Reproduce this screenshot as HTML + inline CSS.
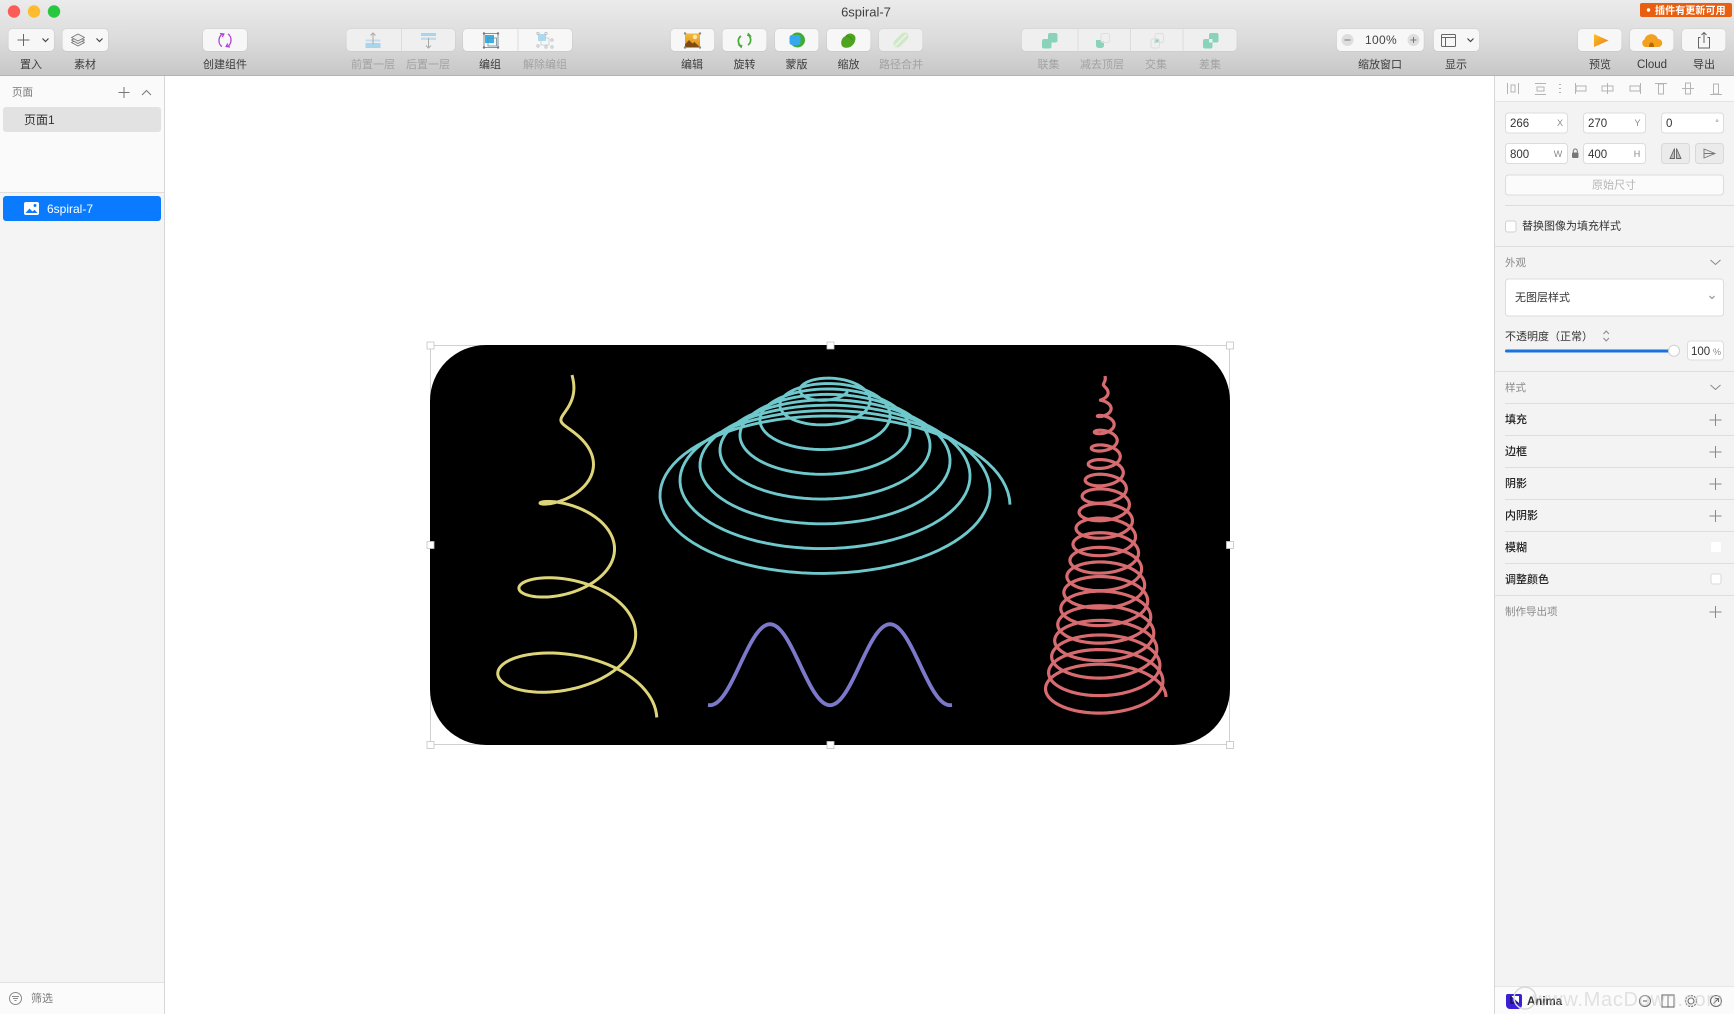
<!DOCTYPE html>
<html lang="zh">
<head>
<meta charset="utf-8">
<title>6spiral-7</title>
<style>
html,body{margin:0;padding:0;width:1734px;height:1014px;overflow:hidden;background:#fff}
svg{display:block;position:absolute;left:0;top:0;filter:blur(.35px)}
text{font-family:"Liberation Sans","Noto Sans CJK SC",sans-serif;font-size:11px}
.l{text-anchor:middle;fill:#3c3c3c}
.d{text-anchor:middle;fill:#a2a2a2}
.b{fill:#f7f7f7;filter:drop-shadow(0 .5px .5px rgba(0,0,0,.18))}
.bd{fill:#efefef;filter:drop-shadow(0 .5px .5px rgba(0,0,0,.14))}
.i{fill:#fff;stroke:#dcdcdc;stroke-width:1}
.n{fill:#333;font-size:11.5px}
.u{fill:#888;font-size:9px;text-anchor:middle}
.h{fill:#8a8a8a;font-size:10.5px}
.t{fill:#222;font-weight:500;font-size:11px}
.sep{stroke:#dddddd;stroke-width:1}
.ic{fill:none;stroke:#6b6b6b;stroke-width:1.1}
.al{fill:none;stroke:#b4b4b4;stroke-width:1}
.hd{fill:#fff;stroke:#c4c4c4;stroke-width:.8}
</style>
</head>
<body>
<svg width="1734" height="1014" viewBox="0 0 1734 1014" xmlns="http://www.w3.org/2000/svg">
<defs>
<linearGradient id="tb" x1="0" y1="0" x2="0" y2="1">
<stop offset="0" stop-color="#ebebeb"/><stop offset=".5" stop-color="#dcdcdc"/><stop offset="1" stop-color="#c7c7c7"/>
</linearGradient>
<linearGradient id="pl" x1="0" y1="0" x2="1" y2="1">
<stop offset="0" stop-color="#f8c32c"/><stop offset="1" stop-color="#ef7a12"/>
</linearGradient>
<linearGradient id="im" x1="0" y1="0" x2="0" y2="1">
<stop offset="0" stop-color="#f3b93a"/><stop offset="1" stop-color="#e0901c"/>
</linearGradient>
</defs>

<!-- canvas -->
<rect x="0" y="0" width="1734" height="1014" fill="#ffffff"/>

<!-- left panel -->
<rect x="0" y="76" width="164.5" height="938" fill="#f3f3f3"/>
<rect x="0" y="76" width="164.5" height="116" fill="#fafafa"/>
<rect x="0" y="192" width="164.5" height="790" fill="#f4f4f4"/>
<rect x="0" y="982" width="164.5" height="32" fill="#fbfbfb"/>
<line x1="0" y1="192.5" x2="164" y2="192.5" stroke="#dedede"/>
<line x1="0" y1="982.5" x2="164" y2="982.5" stroke="#e2e2e2"/>
<line x1="164.5" y1="76" x2="164.5" y2="1014" stroke="#d6d6d6"/>
<text x="12" y="95.500" fill="#777" style="font-size:10.5px">页面</text>
<path d="M124 87v11M118.500 92.500h11" stroke="#777" fill="none"/>
<path d="M142 95l4.500-4.500 4.500 4.500" stroke="#777" fill="none"/>
<rect x="3" y="107" width="158" height="25" rx="3" fill="#e2e2e2"/>
<text x="24" y="124" fill="#333" style="font-size:12px">页面1</text>
<rect x="3" y="196" width="158" height="25" rx="3" fill="#0a7bff"/>
<rect x="24" y="202" width="15" height="13" rx="2" fill="#fff"/>
<path d="M25.500 213l4-4.500 3 3 2-1.800 3 3.300z" fill="#0a7bff"/>
<circle cx="35" cy="205.500" r="1.500" fill="#0a7bff"/>
<text x="47" y="213" fill="#fff" style="font-size:12px">6spiral-7</text>
<circle cx="15.500" cy="998.500" r="6" fill="none" stroke="#8a8a8a"/>
<path d="M12 996.500h7M13 998.500h5M14.500 1000.500h2" stroke="#8a8a8a" fill="none"/>
<text x="31" y="1002" fill="#7c7c7c">筛选</text>

<!-- right panel -->
<rect x="1494" y="76" width="240" height="938" fill="#f3f3f3"/>
<rect x="1494" y="76" width="240" height="25" fill="#fafafa"/>
<line x1="1494.500" y1="76" x2="1494.500" y2="1014" stroke="#d6d6d6"/>
<line x1="1494" y1="101.500" x2="1734" y2="101.500" stroke="#e4e4e4"/>
<!-- align icons -->
<g class="al">
<path d="M1507.500 83v11M1518.500 83v11"/><rect x="1511" y="85" width="4" height="7"/>
<path d="M1535 83.500h11M1535 94.500h11"/><rect x="1537" y="87" width="7" height="4"/>
<path d="M1560 84v1M1560 88v1M1560 92v1" stroke-width="1.500" stroke="#999"/>
<path d="M1575.500 83v11"/><rect x="1576" y="86" width="10" height="5"/>
<path d="M1607.500 83v11"/><rect x="1602" y="86" width="11" height="5"/>
<path d="M1640.500 83v11"/><rect x="1630" y="86" width="10" height="5"/>
<path d="M1655 83.500h12"/><rect x="1658.500" y="84" width="5" height="10"/>
<path d="M1682 88.500h12"/><rect x="1685.500" y="83" width="5" height="11"/>
<path d="M1710 94.500h12"/><rect x="1713.500" y="84" width="5" height="10"/>
</g>
<!-- inputs -->
<rect class="i" x="1505.500" y="113" width="62" height="20" rx="3"/>
<rect class="i" x="1583.500" y="113" width="62" height="20" rx="3"/>
<rect class="i" x="1661.500" y="113" width="62" height="20" rx="3"/>
<rect class="i" x="1505.500" y="143.500" width="62" height="20" rx="3"/>
<rect class="i" x="1583.500" y="143.500" width="62" height="20" rx="3"/>
<text class="n" x="1510" y="127">266</text><text class="u" x="1560" y="126">X</text>
<text class="n" x="1588" y="127">270</text><text class="u" x="1637.500" y="126">Y</text>
<text class="n" x="1666" y="127">0</text><text class="u" x="1717" y="126">°</text>
<text class="n" x="1510" y="158">800</text><text class="u" x="1558" y="157">W</text>
<text class="n" x="1588" y="158">400</text><text class="u" x="1637" y="157">H</text>
<rect x="1572" y="152.500" width="6.500" height="5.500" rx="1" fill="#777"/>
<path d="M1573.300 152.500v-1.500a2 2 0 0 1 4 0v1.500" fill="none" stroke="#777"/>
<rect x="1661.500" y="143.500" width="28" height="20" rx="3" fill="#ebebeb" stroke="#d8d8d8"/>
<rect x="1695.500" y="143.500" width="28" height="20" rx="3" fill="#ebebeb" stroke="#d8d8d8"/>
<path d="M1674.500 148.500l-4.500 10h4.500zM1676.500 148.500v10h4.500z" fill="#bbb" stroke="#666" stroke-width=".9"/>
<path d="M1704 149l11 4.500-11 4.500zM1704 153.500h11" fill="#e8e8e8" stroke="#777" stroke-width=".9"/>
<rect x="1505.500" y="175" width="218" height="20" rx="3" fill="#fbfbfb" stroke="#dcdcdc"/>
<text x="1614" y="188.500" text-anchor="middle" fill="#b5b5b5">原始尺寸</text>
<line class="sep" x1="1505" y1="205.500" x2="1734" y2="205.500"/>
<rect x="1505.500" y="221" width="10.500" height="11" rx="2" fill="#fff" stroke="#d2d2d2"/>
<text x="1522" y="229.500" fill="#333">替换图像为填充样式</text>
<line class="sep" x1="1494" y1="246.500" x2="1734" y2="246.500"/>
<text class="h" x="1505" y="266">外观</text>
<path d="M1710.500 260l5 4.500 5-4.500" fill="none" stroke="#888"/>
<rect class="i" x="1505.500" y="279" width="218" height="37" rx="3"/>
<text x="1515" y="301" fill="#333">无图层样式</text>
<path d="M1709.500 296l2.500 2.500 2.500-2.500" fill="none" stroke="#888"/>
<text x="1505" y="340" fill="#333">不透明度（正常）</text>
<path d="M1603.500 334l2.700-3 2.700 3M1603.500 338l2.700 3 2.700-3" fill="none" stroke="#888"/>
<rect x="1505" y="349.500" width="168" height="3" rx="1.500" fill="#1a72dc"/>
<circle cx="1674" cy="350.700" r="5.500" fill="#fff" stroke="#d0d0d0"/>
<rect class="i" x="1687.500" y="341" width="36" height="19" rx="3"/>
<text x="1691" y="355" fill="#333" style="font-size:11.500px">100</text>
<text x="1713" y="355" fill="#888" style="font-size:9px">%</text>
<line class="sep" x1="1494" y1="371.500" x2="1734" y2="371.500"/>
<text class="h" x="1505" y="391">样式</text>
<path d="M1710.500 385l5 4.500 5-4.500" fill="none" stroke="#888"/>
<line class="sep" x1="1505" y1="403.500" x2="1734" y2="403.500"/>
<text class="t" x="1505" y="423">填充</text>
<line class="sep" x1="1505" y1="435.500" x2="1734" y2="435.500"/>
<text class="t" x="1505" y="455">边框</text>
<line class="sep" x1="1505" y1="467.500" x2="1734" y2="467.500"/>
<text class="t" x="1505" y="487">阴影</text>
<line class="sep" x1="1505" y1="499.500" x2="1734" y2="499.500"/>
<text class="t" x="1505" y="519">内阴影</text>
<line class="sep" x1="1505" y1="531.500" x2="1734" y2="531.500"/>
<text class="t" x="1505" y="551">模糊</text>
<line class="sep" x1="1505" y1="563.500" x2="1734" y2="563.500"/>
<text class="t" x="1505" y="583">调整颜色</text>
<line class="sep" x1="1494" y1="595.500" x2="1734" y2="595.500"/>
<text class="h" x="1505" y="615">制作导出项</text>
<g stroke="#888" fill="none">
<path d="M1715.500 414v12M1709.500 420h12"/>
<path d="M1715.500 446v12M1709.500 452h12"/>
<path d="M1715.500 478v12M1709.500 484h12"/>
<path d="M1715.500 510v12M1709.500 516h12"/>
<path d="M1715.500 606v12M1709.500 612h12"/>
</g>
<rect x="1711" y="542" width="10" height="10" rx="2" fill="#fff"/>
<rect x="1711" y="574" width="10" height="10" rx="2" fill="#fff" stroke="#dadada"/>

<!-- right footer -->
<rect x="1495" y="987" width="239" height="27" fill="#fbfbfb"/>
<line x1="1495" y1="986.500" x2="1734" y2="986.500" stroke="#e6e6e6"/>
<path d="M1507 994h13a2 2 0 0 1 2 2v9a4 4 0 0 1-4 4h-8a4 4 0 0 1-4-4v-9a2 2 0 0 1 1-2z" fill="#3a1fd6"/>
<path d="M1511 996h8v7z" fill="#fff"/><path d="M1511 996v7h7" fill="none" stroke="#20124f" stroke-width="1.500"/>
<text x="1527" y="1005" fill="#333" style="font-weight:700;font-size:11.500px">Anima</text>
<g class="ic" stroke="#8a8a8a">
<circle cx="1645" cy="1001" r="5.500"/><path d="M1643 1001h4"/>
<rect x="1662" y="995" width="12" height="12"/><path d="M1668 995v12"/>
<circle cx="1691" cy="1001" r="3"/><circle cx="1691" cy="1001" r="5.500" stroke-dasharray="2 1.200"/>
<circle cx="1716" cy="1001" r="5.500"/><path d="M1713.500 1003.500l5-5M1715 998.500h3.500v3.500"/>
</g>
<circle cx="1525" cy="998" r="11" fill="none" stroke="#d8d8d8" stroke-width="1.500"/>
<text x="1533" y="1006" textLength="190" lengthAdjust="spacing" style="font-size:20px" fill="#c8c8c8" fill-opacity=".5">www.MacDown.com</text>

<!-- toolbar -->
<rect x="0" y="0" width="1734" height="75.500" fill="url(#tb)"/>
<line x1="0" y1="75.500" x2="1734" y2="75.500" stroke="#b4b4b4"/>
<circle cx="14" cy="11.500" r="6.200" fill="#fc5c57"/>
<circle cx="34" cy="11.500" r="6.200" fill="#fdbb2d"/>
<circle cx="54" cy="11.500" r="6.200" fill="#29c73f"/>
<text x="866" y="16.500" text-anchor="middle" fill="#3f3f3f" style="font-size:13px">6spiral-7</text>
<rect x="1640" y="3" width="92" height="14" rx="2" fill="#e85f10"/>
<circle cx="1648.500" cy="10" r="1.700" fill="#fff"/>
<text x="1655" y="14" fill="#fff" style="font-size:10px;font-weight:700;letter-spacing:.1px">插件有更新可用</text>

<!-- buttons -->
<rect class="b" x="8.500" y="29" width="45.500" height="22" rx="4"/>
<rect class="b" x="62.500" y="29" width="45.500" height="22" rx="4"/>
<rect class="b" x="203" y="29" width="44" height="22" rx="4"/>
<rect class="bd" x="346.500" y="29" width="108.500" height="22" rx="4"/>
<rect class="b" x="463" y="29" width="109" height="22" rx="4"/>
<path d="M401.500 29v22" stroke="#dcdcdc"/>
<path d="M518 29v22" stroke="#dcdcdc"/>
<rect class="b" x="670.800" y="29" width="43.500" height="22" rx="4"/>
<rect class="b" x="722.500" y="29" width="44" height="22" rx="4"/>
<rect class="b" x="775" y="29" width="43.500" height="22" rx="4"/>
<rect class="b" x="827" y="29" width="43.500" height="22" rx="4"/>
<rect class="bd" x="879" y="29" width="43.500" height="22" rx="4"/>
<rect class="bd" x="1021.700" y="29" width="215" height="22" rx="4"/>
<path d="M1078 29v22M1130.500 29v22M1183 29v22" stroke="#dcdcdc"/>
<rect class="b" x="1336.800" y="29" width="87" height="22" rx="4"/>
<rect class="b" x="1433.700" y="29" width="45.500" height="22" rx="4"/>
<rect class="b" x="1578" y="29" width="43.500" height="22" rx="4"/>
<rect class="b" x="1630" y="29" width="43.500" height="22" rx="4"/>
<rect class="b" x="1682" y="29" width="43.500" height="22" rx="4"/>

<!-- button icons -->
<path d="M23.500 34v12M17.500 40h12" stroke="#666" fill="none"/>
<path d="M42.500 38.500l3 3 3-3" stroke="#444" stroke-width="1.200" fill="none"/>
<g fill="#efefef" stroke="#777" stroke-width=".9" stroke-linejoin="round">
<path d="M71.500 42.500l6.500 3.500 6.500-3.500-6.500-3.500z"/>
<path d="M71.500 40l6.500 3.500 6.500-3.500-6.500-3.500z"/>
<path d="M71.500 37.500l6.500 3.500 6.500-3.500-6.500-3.500z"/>
</g>
<path d="M96.500 38.500l3 3 3-3" stroke="#444" stroke-width="1.200" fill="none"/>

<g fill="none" stroke="#b23fd6" stroke-width="1.300">
<path d="M223.500 34c-5.500 1-6 10-1.500 12.500"/><path d="M220 33.500l3.800.5-1.500 3"/>
<path d="M226.500 46.500c5.500-1 6-10 1.500-12.500"/><path d="M230 47l-3.800-.5 1.500-3"/>
</g>

<!-- bring/send -->
<rect x="365.500" y="43" width="15" height="5" fill="#a8d5ec"/>
<rect x="365.500" y="39.500" width="15" height="2" fill="#bfdfef"/>
<path d="M373 44v-11M370.500 35.500l2.500-2.500 2.500 2.500" fill="none" stroke="#a9a9a9"/>
<rect x="421" y="33" width="15" height="3" fill="#a8d5ec"/>
<rect x="421" y="37.500" width="15" height="2.500" fill="#bfdfef"/>
<path d="M428.500 38v10M426 45.500l2.500 2.500 2.500-2.500" fill="none" stroke="#a9a9a9"/>

<!-- group -->
<rect x="484" y="33.500" width="14" height="14" fill="none" stroke="#777" stroke-width=".8"/>
<rect x="485" y="35" width="9" height="8" fill="#35b2ea"/>
<rect x="488" y="38" width="8.500" height="8" fill="none" stroke="#6c8c9a" stroke-width=".8"/>
<g fill="#777"><circle cx="484" cy="33.500" r="1.200"/><circle cx="498" cy="33.500" r="1.200"/><circle cx="484" cy="47.500" r="1.200"/><circle cx="498" cy="47.500" r="1.200"/></g>
<rect x="538" y="34" width="8" height="7" fill="#a9daf0"/>
<rect x="541" y="38" width="8" height="7" fill="none" stroke="#b9cfd8" stroke-width=".8"/>
<g fill="none" stroke="#bdbdbd" stroke-width=".8"><circle cx="538" cy="33.500" r="1.200"/><circle cx="546" cy="33.500" r="1.200"/><circle cx="538" cy="46" r="1.200"/><circle cx="552" cy="40" r="1.200"/><circle cx="552" cy="47" r="1.200"/><circle cx="546" cy="47" r="1.200"/></g>

<!-- edit -->
<rect x="685" y="33.500" width="15" height="14" fill="url(#im)"/>
<circle cx="695" cy="37" r="2.200" fill="#ffe9a8"/>
<path d="M685 47.500v-3l4-4.500 3.500 3.500 2-1.500 5.500 5.500z" fill="#7e4c12"/>
<g fill="#8a8a8a"><circle cx="685" cy="33.500" r="1.200"/><circle cx="700" cy="33.500" r="1.200"/><circle cx="685" cy="47.500" r="1.200"/><circle cx="700" cy="47.500" r="1.200"/></g>

<!-- rotate -->
<g fill="none" stroke="#46ab38" stroke-width="1.700">
<path d="M741 36c-3 2-3.800 6.500-.5 10"/>
<path d="M748 45c3-2 3.800-6.500.5-10"/>
</g>
<path d="M737.500 44.500l5 .5-1 3.500zM752 36.500l-5-.5 1-3.500z" fill="#46ab38"/>

<!-- mask -->
<circle cx="797.500" cy="40" r="7.500" fill="#3fae2e"/>
<rect x="789.500" y="35" width="11" height="10" rx="2.500" fill="#36a9ee"/>

<!-- scale -->
<path d="M842 46c-2-4 0-8.500 3.500-10 1.500-2.500 5-3 7-2 2.500 1 3.500 3.500 2.800 6-.8 4-3.800 7.500-8.300 7.800-2 .1-4-.5-5-1.800z" fill="#4ea41f"/>
<path d="M846 36c2 0 5.500 1.500 6.500 4.500" stroke="#2f8412" fill="none" stroke-width=".7"/>

<!-- path merge -->
<g transform="rotate(-45 901 40)">
<rect x="892" y="36" width="18" height="8" rx="4" fill="#cfe8c6"/>
<path d="M893 40h16" stroke="#f2f2f2" stroke-width="1.400"/>
</g>

<!-- boolean -->
<g fill="#8ad3bb">
<rect x="1042" y="39" width="9.500" height="9.500" rx="2"/><rect x="1048" y="33" width="9.500" height="9.500" rx="2"/>
<path d="M1096 40h5v1.500h3v4a2.500 2.500 0 0 1-2.500 2.500h-3a2.500 2.500 0 0 1-2.500-2.500z"/>
<rect x="1154.500" y="38.500" width="4" height="4.500"/>
<rect x="1203" y="39" width="9.500" height="9.500" rx="2"/><rect x="1209" y="33" width="9.500" height="9.500" rx="2"/>
</g>
<rect x="1101" y="33.500" width="8.500" height="9" rx="2" fill="none" stroke="#dedede"/>
<rect x="1151" y="39" width="8.500" height="9" rx="2" fill="none" stroke="#dedede"/>
<rect x="1155" y="33.500" width="8.500" height="9" rx="2" fill="none" stroke="#dedede"/>
<rect x="1209" y="39" width="3.500" height="3.500" fill="#efefef"/>

<!-- zoom -->
<circle cx="1347.500" cy="40" r="6" fill="#dedede"/><path d="M1344.500 40h6" stroke="#777"/>
<circle cx="1413.500" cy="40" r="6" fill="#dedede"/><path d="M1410.500 40h6M1413.500 37v6" stroke="#777"/>
<text x="1381" y="44" text-anchor="middle" fill="#444" style="font-size:12px;letter-spacing:.3px">100%</text>
<!-- view -->
<rect x="1441.500" y="34.500" width="14" height="12" rx="1" fill="none" stroke="#666"/>
<path d="M1441.500 37.500h14M1445.500 37.500v9" fill="none" stroke="#666"/>
<path d="M1467.500 38.500l3 3 3-3" stroke="#444" stroke-width="1.200" fill="none"/>
<!-- preview -->
<path d="M1594 34l14.500 6.500-14.500 6.500z" fill="url(#pl)"/>
<!-- cloud -->
<path d="M1645.500 47a4 4 0 0 1-1-7.500 7 7 0 0 1 13.500-.5 4 4 0 0 1 .5 8z" fill="#f2a01d"/>
<path d="M1649 47c0-3 1-4.500 2.500-4.500s2.500 1.500 2.500 4.500z" fill="#b9640f"/>
<!-- export -->
<path d="M1700.500 37.500h-2v10.500h11v-10.500h-2M1704 43v-10.500M1701.500 35l2.500-2.500 2.500 2.500" fill="none" stroke="#666"/>

<!-- labels -->
<text class="l" x="31" y="68">置入</text>
<text class="l" x="85" y="68">素材</text>
<text class="l" x="225" y="68">创建组件</text>
<text class="d" x="373" y="68">前置一层</text>
<text class="d" x="428" y="68">后置一层</text>
<text class="l" x="490" y="68">编组</text>
<text class="d" x="545" y="68">解除编组</text>
<text class="l" x="692" y="68">编辑</text>
<text class="l" x="744.500" y="68">旋转</text>
<text class="l" x="796.500" y="68">蒙版</text>
<text class="l" x="848.500" y="68">缩放</text>
<text class="d" x="901" y="68">路径合并</text>
<text class="d" x="1048.500" y="68">联集</text>
<text class="d" x="1102" y="68">减去顶层</text>
<text class="d" x="1156" y="68">交集</text>
<text class="d" x="1210" y="68">差集</text>
<text class="l" x="1380" y="68">缩放窗口</text>
<text class="l" x="1456" y="68">显示</text>
<text class="l" x="1600" y="68">预览</text>
<text class="l" x="1652" y="68" style="font-size:11.500px">Cloud</text>
<text class="l" x="1704" y="68">导出</text>

<!-- artwork -->
<rect x="430.500" y="345.500" width="799" height="399" fill="none" stroke="#d0d0d0" stroke-width="1"/>
<rect x="430" y="345" width="800" height="400" rx="56" ry="56" fill="#000"/>
<path id="yel" fill="none" stroke="#ded57a" stroke-width="3" stroke-linecap="butt" stroke-linejoin="round"/>
<path id="cya" fill="none" stroke="#6fc8cb" stroke-width="2.900" stroke-linejoin="round"/>
<path id="red" fill="none" stroke="#d76b6f" stroke-width="3.200" stroke-linejoin="round"/>
<path id="pur" fill="none" stroke="#7c79cb" stroke-width="3.800"/>
<rect class="hd" x="427" y="342" width="7" height="7"/>
<rect class="hd" x="827" y="342" width="7" height="7"/>
<rect class="hd" x="1226.500" y="342" width="7" height="7"/>
<rect class="hd" x="427" y="541.500" width="7" height="7"/>
<rect class="hd" x="1226.500" y="541.500" width="7" height="7"/>
<rect class="hd" x="427" y="741.500" width="7" height="7"/>
<rect class="hd" x="827" y="741.500" width="7" height="7"/>
<rect class="hd" x="1226.500" y="741.500" width="7" height="7"/>
</svg>
<script>
function helix(cx,y0,k,a,b,t0,t1){
  var d="",s=(t1-t0)/Math.ceil((t1-t0)*90),n=Math.round((t1-t0)/s);
  for(var i=0;i<=n;i++){
    var t=t0+i*s,th=2*Math.PI*t;
    var x=cx+k*t*Math.cos(th),y=y0+t*(a+b*Math.sin(th));
    d+=(i?"L":"M")+x.toFixed(2)+" "+y.toFixed(2);
  }
  return d;
}
document.getElementById("yel").setAttribute("d",helix(572,375,21.2,85.6,11,0,4));
document.getElementById("cya").setAttribute("d",helix(830,368.7,20,15.1,9.7,1.1,9));
document.getElementById("red").setAttribute("d",helix(1105,376,3.05,16.05,1.455,0,20));
var p="";
for(var x=708;x<=952;x+=2){
  var y=664.7-40.5*Math.cos(2*Math.PI*(x-770)/120);
  p+=(p?"L":"M")+x+" "+y.toFixed(2);
}
document.getElementById("pur").setAttribute("d",p);
</script>
</body>
</html>
